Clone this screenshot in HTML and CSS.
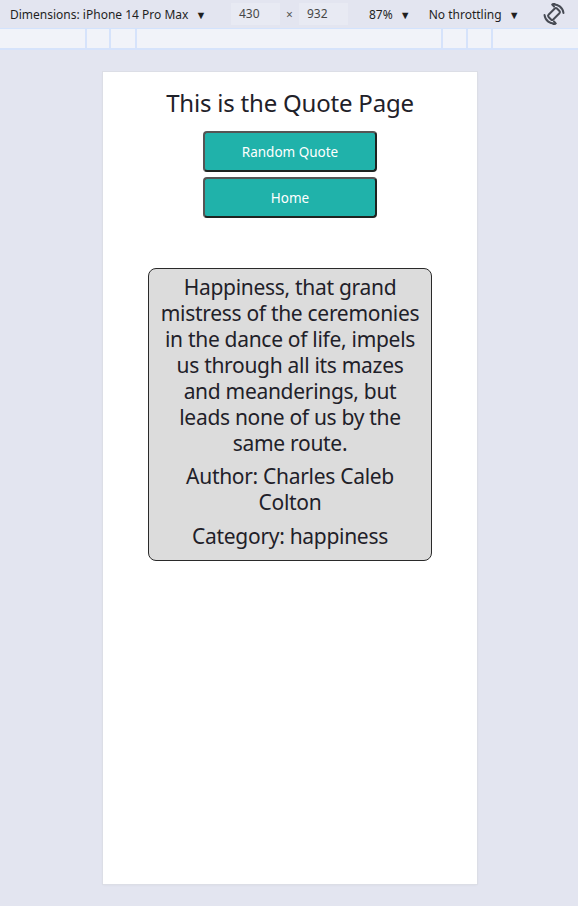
FILE: index.html
```html
<!DOCTYPE html>
<html lang="en">
<head>
<meta charset="utf-8">
<title>Quote Page</title>
<link rel="stylesheet" href="styles.css">
</head>
<body>
<div class="toolbar">
  <div class="dims">Dimensions: iPhone 14 Pro Max <span class="caret">▼</span></div>
  <div class="size">
    <span class="num-box">430</span>
    <span class="times">×</span>
    <span class="num-box">932</span>
  </div>
  <div class="zoom">87% <span class="caret">▼</span></div>
  <div class="throttle">No throttling <span class="caret">▼</span></div>
  <div class="rotate">
    <svg width="22" height="22" viewBox="0 0 20 20" fill="none" stroke="#474b54" stroke-width="1.8" stroke-linecap="round" stroke-linejoin="round">
      <rect x="7" y="4.6" width="6" height="10.8" rx="1.4" transform="rotate(45 10 10)"/>
      <path d="M8.6 1.4 A8.7 8.7 0 0 1 18.6 9" />
      <path d="M11.4 18.6 A8.7 8.7 0 0 1 1.4 11" />
      <path d="M10.4 0.4 L8.6 1.4 L10 3.2" />
      <path d="M9.6 19.6 L11.4 18.6 L10 16.8" />
    </svg>
  </div>
</div>
<div class="ruler">
  <div class="seg s1"></div><div class="seg s2"></div><div class="seg s3"></div>
  <div class="seg s4"></div>
  <div class="seg s5"></div><div class="seg s6"></div><div class="seg s7"></div>
</div>
<div class="stage">
  <main class="device">
    <h1 class="title">This is the Quote Page</h1>
    <div class="actions">
      <button class="btn">Random Quote</button>
      <button class="btn">Home</button>
    </div>
    <section class="card">
      <p class="quote">Happiness, that grand mistress of the ceremonies in the dance of life, impels us through all its mazes and meanderings, but leads none of us by the same route.</p>
      <p class="meta">Author: Charles Caleb Colton</p>
      <p class="meta">Category: happiness</p>
    </section>
  </main>
</div>
</body>
</html>
```
FILE: styles.css
```css
* { box-sizing: border-box; }
html, body { margin: 0; padding: 0; }
body {
  background: #e3e5f0;
  font-family: "Noto Sans", "Open Sans", sans-serif;
  color: #1f1f1f;
  height: 906px;
  overflow: hidden;
}
.toolbar {
  height: 29px;
  display: flex;
  align-items: center;
  font-size: 12px;
  color: #1f1f1f;
  border-bottom: 1px solid #d3e3fd;
  background: #e3e5f0;
}
.dims { margin-left: 10px; width: 221px; white-space: nowrap; }
.caret { font-size: 11px; margin-left: 4px; }
.size { display: flex; align-items: center; }
.num-box {
  display: inline-block;
  width: 49px;
  height: 22px;
  line-height: 22px;
  padding-left: 8px;
  background: #e8eaf3;
  color: #474747;
}
.times { width: 19px; text-align: center; color: #555; }
.zoom { margin-left: 21px; white-space: nowrap; }
.throttle { margin-left: 18px; white-space: nowrap; }
.rotate { margin-left: 23px; display: flex; align-items: center; }
.ruler {
  height: 21px;
  display: flex;
  background: #f1f3f9;
  border-bottom: 2px solid #d6e3fb;
}
.seg { height: 100%; border-right: 2px solid #d6e3fb; }
.s1 { width: 87px; }
.s2 { width: 24px; }
.s3 { width: 26px; }
.s4 { width: 306px; }
.s5 { width: 25px; }
.s6 { width: 25px; }
.s7 { flex: 1; border-right: none; }
.stage {
  display: flex;
  justify-content: center;
  padding-top: 22px;
  padding-left: 2px;
}
.device {
  width: 374px;
  height: 812px;
  background: #ffffff;
  box-shadow: 0 0 0 1px #dcdee6, 0 1px 3px rgba(0,0,0,0.06);
  display: flex;
  flex-direction: column;
  align-items: center;
  padding-top: 15px;
}
.title {
  margin: 0;
  font-size: 24px;
  font-weight: 400;
  color: #1f2129;
  line-height: 31px;
  letter-spacing: -0.2px;
}
.actions {
  display: flex;
  flex-direction: column;
  gap: 5px;
  margin-top: 13px;
}
.btn {
  width: 174px;
  height: 41px;
  background: #20b2aa;
  color: #ffffff;
  border: 2px solid #1e2320;
  border-top-color: #555;
  border-left-color: #555;
  border-radius: 4px;
  font-family: inherit;
  font-size: 13.5px;
  padding: 0;
}
.card {
  margin-top: 50px;
  width: 284px;
  background: #dcdcdc;
  border: 1px solid #2a2a2a;
  border-radius: 8px;
  padding: 5px 8px 11px;
  text-align: center;
  color: #1f2129;
  font-size: 21px;
  line-height: 26px;
  letter-spacing: -0.3px;
}
.card p { margin: 0; }
.quote { margin-bottom: 7px !important; }
.meta + .meta { margin-top: 8px !important; }
```
